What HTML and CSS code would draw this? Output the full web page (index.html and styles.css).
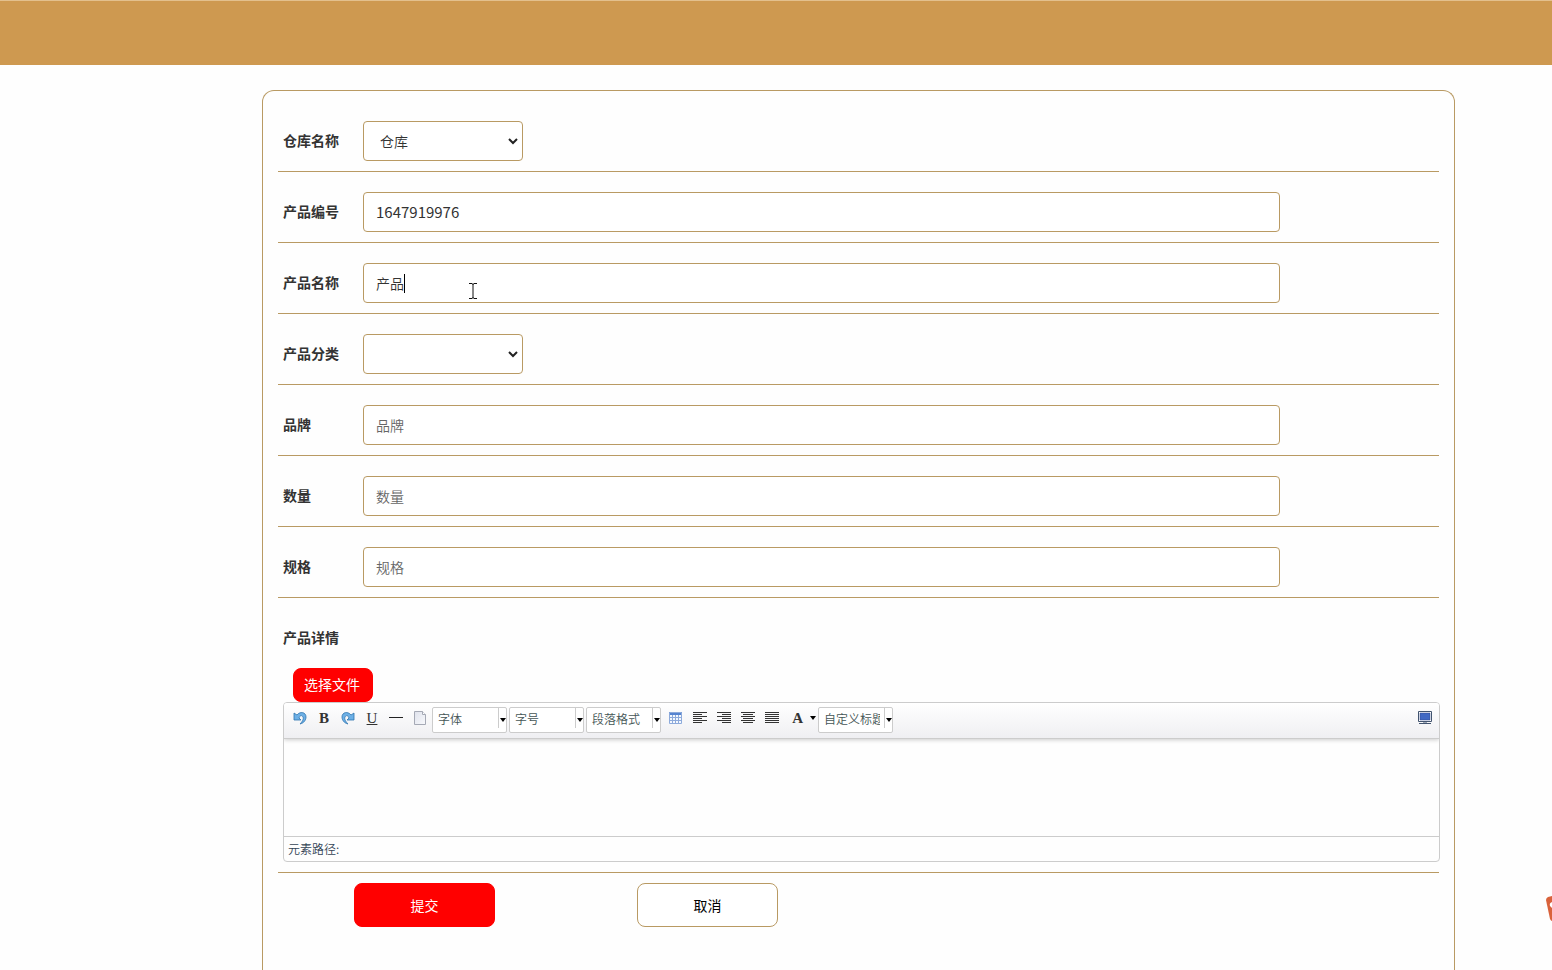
FILE: index.html
```html
<!DOCTYPE html>
<html lang="zh-CN">
<head>
<meta charset="utf-8">
<title>产品</title>
<link rel="stylesheet" href="styles.css">
</head>
<body>
<header class="topbar"></header>
<main class="page">
<form class="card">
  <div class="row">
    <label class="label" for="store">仓库名称</label>
    <span class="picker"><select class="field select" id="store"><option>仓库</option></select>
    <svg class="chevron" width="10" height="7" viewBox="0 0 10 7"><path d="M1 1l4 4 4-4" fill="none" stroke="#222" stroke-width="2"/></svg></span>
  </div>
  <div class="row">
    <label class="label" for="code">产品编号</label>
    <input class="field text number" id="code" type="text" value="1647919976">
  </div>
  <div class="row">
    <label class="label" for="name">产品名称</label>
    <div class="typing">
      <input class="field text" id="name" type="text" value="产品">
      <span class="caret"></span>
      <svg class="ibeam" width="8" height="16" viewBox="0 0 8 16"><path d="M0 .5h3M5 .5h3M0 15.5h3M5 15.5h3M4 1v14M3 1h2M3 15h2" fill="none" stroke="#111"/></svg>
    </div>
  </div>
  <div class="row">
    <label class="label" for="kind">产品分类</label>
    <span class="picker"><select class="field select" id="kind"><option></option></select>
    <svg class="chevron" width="10" height="7" viewBox="0 0 10 7"><path d="M1 1l4 4 4-4" fill="none" stroke="#222" stroke-width="2"/></svg></span>
  </div>
  <div class="row">
    <label class="label" for="brand">品牌</label>
    <input class="field text" id="brand" type="text" placeholder="品牌">
  </div>
  <div class="row">
    <label class="label" for="amount">数量</label>
    <input class="field text" id="amount" type="text" placeholder="数量">
  </div>
  <div class="row">
    <label class="label" for="spec">规格</label>
    <input class="field text" id="spec" type="text" placeholder="规格">
  </div>
  <div class="row detail">
    <label class="label" for="body">产品详情</label>
    <button class="choose" type="button">选择文件</button>
    <div class="editor">
      <div class="toolbar">
        <button class="tool" type="button" aria-label="撤销"><svg width="16" height="16" viewBox="0 0 16 16"><path d="M2 3v7h7L7 8c1-3 3-3 4-1s-1 5-3 7c4-1 6-4 6-7 0-5-6-6-9-2z" fill="#6db0e6" stroke="#2f73ae" stroke-width=".8" stroke-linejoin="round"/></svg></button>
        <button class="tool glyph bold" type="button" aria-label="加粗">B</button>
        <button class="tool" type="button" aria-label="重做"><svg width="16" height="16" viewBox="0 0 16 16"><path d="M14 3v7H7l2-2C8 5 6 5 5 7s1 5 3 7c-4-1-6-4-6-7 0-5 6-6 9-2z" fill="#6db0e6" stroke="#2f73ae" stroke-width=".8" stroke-linejoin="round"/></svg></button>
        <button class="tool glyph under" type="button" aria-label="下划线">U</button>
        <button class="tool" type="button" aria-label="分隔线"><svg width="16" height="16" viewBox="0 0 16 16"><path d="M1 7.5h14" stroke="#222"/></svg></button>
        <button class="tool" type="button" aria-label="清空文档"><svg width="16" height="16" viewBox="0 0 16 16"><defs><linearGradient id="paper" x2="1" y2="1"><stop stop-color="#dfe2ec"/><stop offset="1" stop-color="#f8f9fc"/></linearGradient></defs><path d="M2.500 1.500h8l3 3v10h-11z" fill="url(#paper)" stroke="#a5a9b5"/><path d="M10.500 1.500v3h3" fill="#fff" stroke="#a5a9b5"/></svg></button>
        <span class="combo"><select aria-label="字体"><option>字体</option></select><svg class="arrow" width="6" height="4"><path d="M0 0h6L3 4z"/></svg></span>
        <span class="combo"><select aria-label="字号"><option>字号</option></select><svg class="arrow" width="6" height="4"><path d="M0 0h6L3 4z"/></svg></span>
        <span class="combo"><select aria-label="段落格式"><option>段落格式</option></select><svg class="arrow" width="6" height="4"><path d="M0 0h6L3 4z"/></svg></span>
        <button class="tool" type="button" aria-label="插入表格"><svg width="16" height="16" viewBox="0 0 16 16"><path d="M2 2h13v12H2z" fill="#f4f8fe"/><path d="M2 2h13v3H2z" fill="#5684d0"/><path d="M2.500 2.500h12v11h-12zM5.500 5v8.500M8.500 5v8.500M11.500 5v8.500M2.500 7.500h12M2.500 10.500h12" fill="none" stroke="#8daadb"/></svg></button>
        <button class="tool" type="button" aria-label="居左对齐"><svg width="16" height="16" viewBox="0 0 16 16"><path d="M2 2.500h14M2 4.500h9M2 6.500h14M2 8.500h9M2 10.500h14M2 12.500h9" stroke="#333"/></svg></button>
        <button class="tool" type="button" aria-label="居右对齐"><svg width="16" height="16" viewBox="0 0 16 16"><path d="M2 2.500h14M7 4.500h9M2 6.500h14M7 8.500h9M2 10.500h14M7 12.500h9" stroke="#333"/></svg></button>
        <button class="tool" type="button" aria-label="居中对齐"><svg width="16" height="16" viewBox="0 0 16 16"><path d="M2 2.500h14M4 4.500h10M2 6.500h14M4 8.500h10M2 10.500h14M4 12.500h10" stroke="#333"/></svg></button>
        <button class="tool" type="button" aria-label="两端对齐"><svg width="16" height="16" viewBox="0 0 16 16"><path d="M2 2.500h14M2 4.500h14M2 6.500h14M2 8.500h14M2 10.500h14M2 12.500h14" stroke="#333"/></svg></button>
        <button class="tool glyph color" type="button" aria-label="字体颜色">A<svg width="6" height="4"><path d="M0 0h6L3 4z"/></svg></button>
        <span class="combo"><select aria-label="自定义标题"><option>自定义标题</option></select><svg class="arrow" width="6" height="4"><path d="M0 0h6L3 4z"/></svg></span>
        <button class="tool full" type="button" aria-label="全屏"><svg width="16" height="16" viewBox="0 0 16 16"><path d="M1.500 1.500h13v10h-13z" fill="#fff" stroke="#42546f"/><path d="M3 3h10v7H3z" fill="#4169c4" stroke="#2d468c" stroke-width=".5"/><path d="M6 12h4v1H6z" fill="#9ba6b6"/><path d="M2 13.500h12" stroke="#42546f"/></svg></button>
      </div>
      <textarea class="content" id="body"></textarea>
      <div class="path">元素路径:</div>
    </div>
  </div>
  <div class="actions">
    <button class="action submit" type="submit">提交</button>
    <button class="action cancel" type="button">取消</button>
  </div>
</form>
</main>
<svg class="badge" width="6" height="26" viewBox="0 0 6 26"><path d="M6 0L2 1Q0 2 0 4l4 19q1 2 2 2z" fill="#d9623b"/><path d="M6 6Q3 7 4 10l2 2z" fill="#fff"/></svg>
</body>
</html>
```
FILE: styles.css
```css
* {
  box-sizing: border-box;
}
body {
  margin: 0;
  min-height: 100vh;
  display: flex;
  flex-direction: column;
  background: #fefefe;
  color: #333;
  font-family: "Noto Sans CJK SC", sans-serif;
  font-size: 14px;
}
button, input, select, textarea {
  margin: 0;
  font-family: inherit;
  font-size: inherit;
  color: inherit;
}
.topbar {
  height: 65px;
  flex: none;
  background: #ce9950;
  border-top: 1px solid #e3c08d;
}
.page {
  flex: 1;
  display: flex;
  padding: 25px 97px 0 262px;
}
.card {
  flex: 1;
  min-width: 0;
  padding: 10px 15px 43px;
  border: 1px solid #b99a63;
  border-bottom: 0;
  border-radius: 12px 12px 0 0;
}
.row {
  display: flex;
  padding: 20px 159px 10px 5px;
  border-bottom: 1px solid #b99a63;
}
.label {
  width: 80px;
  height: 40px;
  flex: none;
  line-height: 38px;
  font-weight: 700;
}
.field {
  display: block;
  height: 40px;
  background: #fff;
  border: 1px solid #b99a63;
  border-radius: 4px;
  outline: none;
}
.text {
  flex: 1;
  width: 100%;
  min-width: 0;
  padding: 0 12px;
  font-weight: 350;
}
.number {
  font-size: 15px;
  font-weight: 400;
  padding-bottom: 2px;
}
.text::placeholder {
  color: #666;
  opacity: 1;
}
.picker {
  position: relative;
}
.select {
  width: 160px;
  padding: 0 16px;
  appearance: none;
  font-weight: 350;
}
.chevron {
  position: absolute;
  right: 5px;
  top: 17px;
  pointer-events: none;
}
.typing {
  position: relative;
  flex: 1;
}
.caret {
  position: absolute;
  left: 41px;
  top: 11px;
  width: 1px;
  height: 19px;
  background: #000;
}
.ibeam {
  position: absolute;
  left: 106px;
  top: 20px;
}
.detail {
  flex-direction: column;
  align-items: flex-start;
  padding-right: 0;
}
.choose {
  width: 80px;
  height: 34px;
  margin: 10px 0 0 10px;
  padding: 0 2px 2px 0;
  background: #f00;
  border: 1px solid #f00;
  border-radius: 8px;
  color: #fff;
  white-space: nowrap;
}
.editor {
  align-self: stretch;
  margin-right: -1px;
  border: 1px solid #ccc;
  border-radius: 4px;
  overflow: hidden;
  font-size: 12px;
}
.toolbar {
  display: flex;
  height: 36px;
  padding: 3px 2px 5px 4px;
  border-bottom: 1px solid #ccc;
  box-shadow: 0 1px 4px #ccc;
  background: linear-gradient(#fff, #efeff2);
}
.tool {
  width: 24px;
  height: 24px;
  padding: 0;
  border: 0;
  background: none;
  display: flex;
  align-items: center;
  justify-content: center;
}
.glyph {
  font-family: "Liberation Serif", serif;
  font-size: 15px;
}
.bold, .color {
  font-weight: 700;
}
.under {
  text-decoration: underline;
}
.color {
  width: 33px;
  gap: 7px;
  justify-content: flex-end;
  margin-right: 2px;
}
.combo {
  position: relative;
  width: 75px;
  height: 26px;
  margin: 1px 2px 0 0;
  border: 1px solid #ccc;
  border-radius: 2px;
  background: #fff;
}
.combo select {
  display: block;
  width: 66px;
  height: 20px;
  padding: 0 4px 0 5px;
  border: 0;
  border-right: 1px solid #ccc;
  background: none;
  appearance: none;
  color: #455;
  font-weight: 350;
}
.arrow {
  position: absolute;
  right: 0;
  top: 10px;
  pointer-events: none;
}
.full {
  margin-left: auto;
}
.content {
  display: block;
  width: 100%;
  height: 97px;
  padding: 8px;
  border: 0;
  resize: none;
  outline: none;
  background: none;
}
.path {
  height: 25px;
  padding-left: 4px;
  border-top: 1px solid #ccc;
  line-height: 24px;
  color: #345;
  font-weight: 350;
}
.actions {
  display: flex;
  gap: 142px;
  padding: 10px 0 0 76px;
}
.action {
  width: 141px;
  height: 44px;
  border: 1px solid #b99a63;
  border-radius: 8px;
  background: #fff;
  color: #000;
}
.submit {
  background: #f00;
  border-color: #f00;
  color: #fff;
}
.badge {
  position: fixed;
  right: 0;
  top: 896px;
}
```
